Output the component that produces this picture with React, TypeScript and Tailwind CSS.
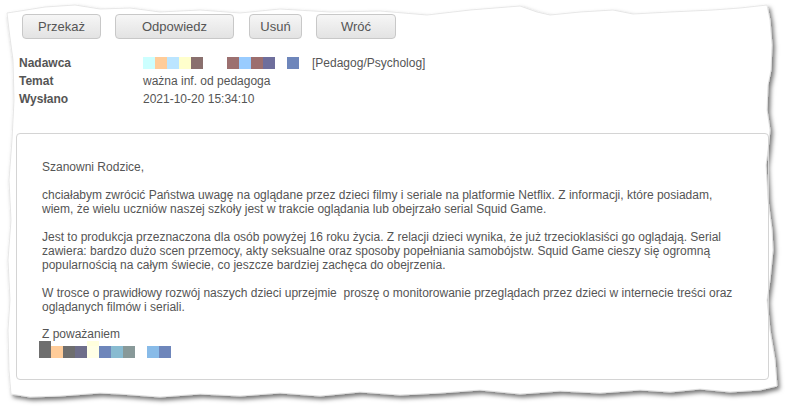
import React from "react"

const buttons = [
  { label: "Przekaż", cls: "w-[79px]" },
  { label: "Odpowiedz", cls: "w-[119px] ml-[14px]" },
  { label: "Usuń", cls: "w-[53px] ml-[15px]" },
  { label: "Wróć", cls: "w-[80px] ml-[14px]" },
]

const senderBlocks = [
  { colors: ["#ccffff", "#ffcc99", "#bbe5ff", "#ffffcc", "#8a706e"], gap: "mr-[24px]" },
  { colors: ["#9c7070", "#99ccff", "#9c6e6e", "#6e6e9c"], gap: "mr-[12px]" },
  { colors: ["#6e86bb"], gap: "mr-[13px]" },
]

const PaperEdge = () => (
  <svg className="absolute inset-0" width="785" height="409" viewBox="0 0 785 409">
    <defs>
      <filter id="torn" x="-5%" y="-5%" width="110%" height="110%">
        <feDropShadow dx="2.5" dy="3" stdDeviation="2" floodColor="#000" floodOpacity="0.55" />
      </filter>
    </defs>
    <path
      filter="url(#torn)"
      fill="#fff"
      stroke="#e2e2e2"
      strokeWidth="0.8"
      d="M7,13 L20,11 L45,7 L75,5 L100,9 L130,8 L160,12 L200,10 L240,13 L280,9 L330,12 L380,11 L427,15 L470,10 L520,6 L537,12 L550,15 L580,12 L613,10 L633,14 L670,12 L713,10 L740,8 L767,5
         L770,20 L772,45 L771,70 L768,85 L767,110 L770,130 L768,150 L766,165 L768,200 L772,230 L773,250 L770,280 L767,300 L770,330 L775,360 L777,386
         L760,390 L730,392 L700,389 L670,392 L640,390 L600,393 L560,391 L520,394 L480,390 L440,393 L400,395 L360,392 L320,396 L280,393 L240,396 L200,394 L160,397 L120,394 L100,393 L60,396 L30,397 L11,394
         L9,370 L8,330 L10,300 L8,260 L11,220 L9,180 L12,140 L14,100 L13,60 L9,30 Z"
    />
  </svg>
)

const Block = ({ c, tall }: { c: string; tall?: boolean }) => (
  <span className={`inline-block w-[12px] ${tall ? "h-[17px]" : "h-[12px]"}`} style={{ background: c }} />
)

export default function App() {
  return (
    <div className="relative w-[785px] h-[409px] bg-white overflow-hidden text-[#555] font-['Liberation_Sans',Arial,sans-serif]">
      <PaperEdge />

      <div className="relative pt-[14px]">
        {/* toolbar */}
        <div className="flex pl-[22px]">
          {buttons.map(b => (
            <button
              key={b.label}
              className={`${b.cls} h-[25px] rounded-[4px] border border-[#c8c8c8] bg-gradient-to-b from-[#f6f6f6] to-[#e3e3e3] text-[13px] text-[#555]`}
            >
              {b.label}
            </button>
          ))}
        </div>

        {/* headers */}
        <div className="mt-[15px] pl-[19px] text-[12px] leading-[18px]">
          <div className="flex">
            <span className="w-[124px] font-bold">Nadawca</span>
            <span className="flex items-center">
              {senderBlocks.map((g, i) => (
                <span key={i} className={`flex ${g.gap}`}>
                  {g.colors.map((c, j) => <Block key={j} c={c} />)}
                </span>
              ))}
              <span>[Pedagog/Psycholog]</span>
            </span>
          </div>
          <div className="flex">
            <span className="w-[124px] font-bold">Temat</span>
            <span>ważna inf. od pedagoga</span>
          </div>
          <div className="flex">
            <span className="w-[124px] font-bold">Wysłano</span>
            <span>2021-10-20 15:34:10</span>
          </div>
        </div>

        {/* message body */}
        <div className="ml-[16px] mt-[25px] w-[753px] rounded-[4px] border border-[#d4d4d4] px-[25px] pt-[26px] pb-[21px] text-[12px] leading-[14px]">
          <p>Szanowni Rodzice,</p>
          <p className="mt-[14px]">
            chciałabym zwrócić Państwa uwagę na oglądane przez dzieci filmy i seriale na platformie Netflix. Z informacji, które posiadam, wiem, że wielu uczniów naszej szkoły jest w trakcie oglądania lub obejrzało serial Squid Game.
          </p>
          <p className="mt-[14px]">
            Jest to produkcja przeznaczona dla osób powyżej 16 roku życia. Z relacji dzieci wynika, że już trzecioklasiści go oglądają. Serial zawiera: bardzo dużo scen przemocy, akty seksualne oraz sposoby popełniania samobójstw. Squid Game cieszy się ogromną popularnością na całym świecie, co jeszcze bardziej zachęca do obejrzenia.
          </p>
          <p className="mt-[14px]">
            W trosce o prawidłowy rozwój naszych dzieci uprzejmie{"\u00a0"} proszę o monitorowanie przeglądach przez dzieci w internecie treści oraz oglądanych filmów i seriali.
          </p>
          <p className="mt-[13px]">Z poważaniem</p>
          <div className="flex items-end -ml-[3px]">
            <Block c="#6e6e6e" tall />
            <Block c="#ffcc99" />
            <Block c="#6e6e6e" />
            <Block c="#6e6e8a" />
            <span className="flex flex-col w-[12px] h-[17px]">
              <span className="h-[5px] bg-[#ffffdd]" />
              <span className="flex-1 bg-[#ffffe6]" />
            </span>
            <Block c="#6e86bb" />
            <Block c="#88bbd1" />
            <Block c="#889999" />
            <span className="w-[12px]" />
            <Block c="#88bbe8" />
            <Block c="#6e86bb" />
          </div>
        </div>
      </div>
    </div>
  )
}
